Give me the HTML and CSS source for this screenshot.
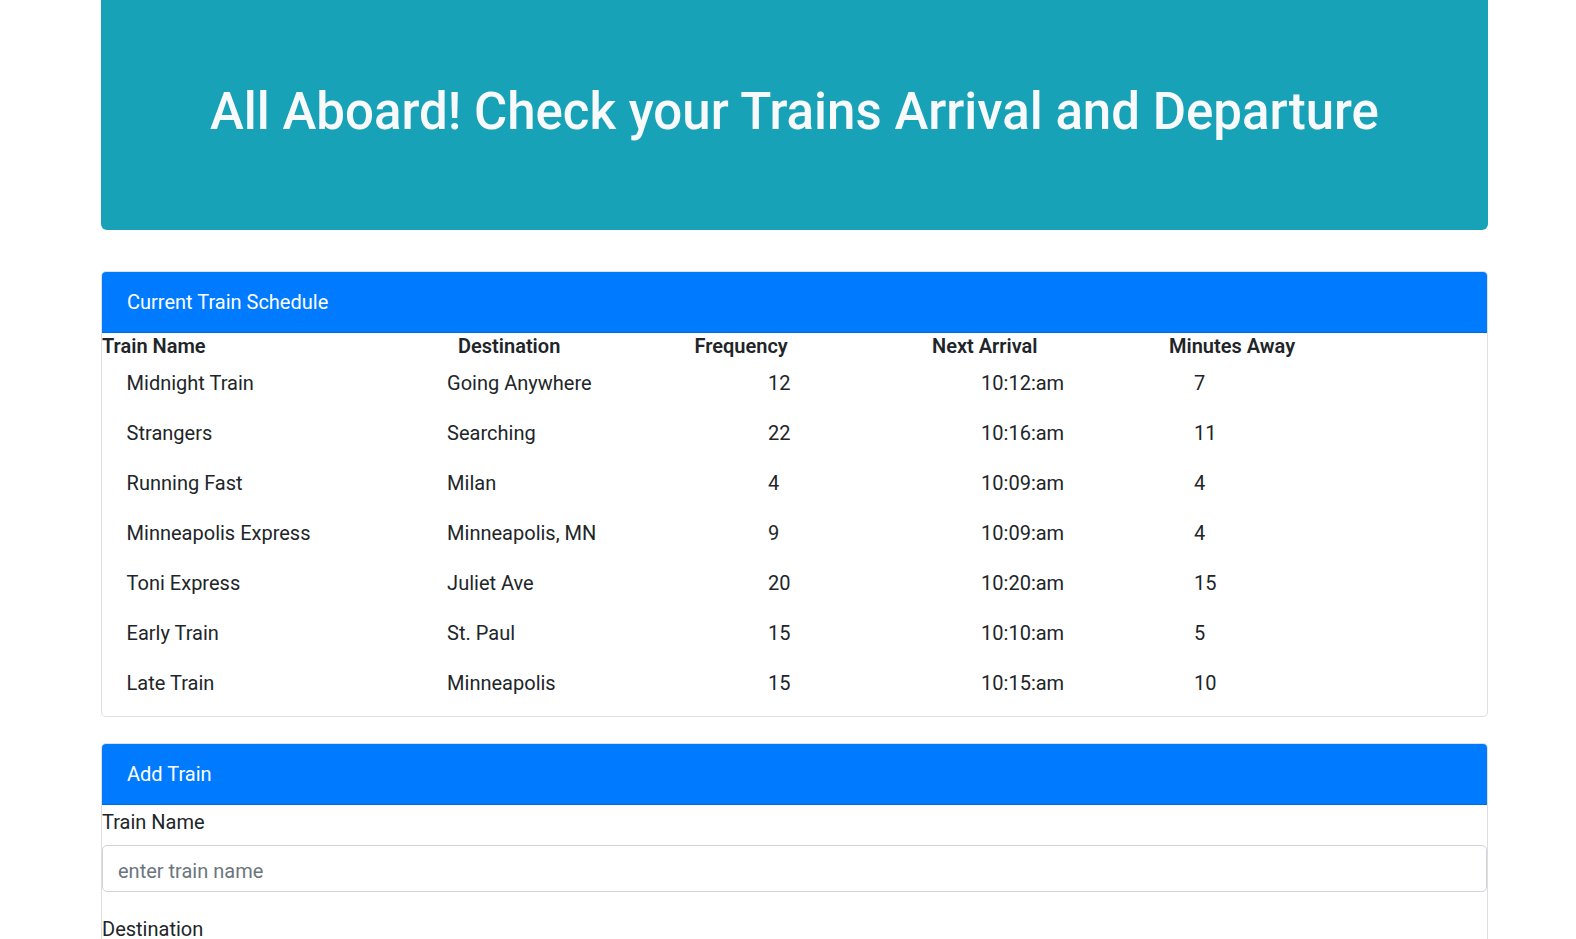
FILE: index.html
```html
<!DOCTYPE html>
<html lang="en">
<head>
<meta charset="utf-8">
<title>Train Scheduler</title>
<link rel="stylesheet" href="styles.css">
</head>
<body>
<div class="page">
  <header class="jumbotron">
    <h1 class="title">All Aboard! Check your Trains Arrival and Departure</h1>
  </header>

  <section class="card schedule">
    <div class="card-header">Current Train Schedule</div>
    <div class="sched-head">
      <div>Train Name</div>
      <div>Destination</div>
      <div>Frequency</div>
      <div>Next Arrival</div>
      <div>Minutes Away</div>
    </div>
    <div class="sched-body">
      <div class="row"><div>Midnight Train</div><div>Going Anywhere</div><div>12</div><div>10:12:am</div><div>7</div></div>
      <div class="row"><div>Strangers</div><div>Searching</div><div>22</div><div>10:16:am</div><div>11</div></div>
      <div class="row"><div>Running Fast</div><div>Milan</div><div>4</div><div>10:09:am</div><div>4</div></div>
      <div class="row"><div>Minneapolis Express</div><div>Minneapolis, MN</div><div>9</div><div>10:09:am</div><div>4</div></div>
      <div class="row"><div>Toni Express</div><div>Juliet Ave</div><div>20</div><div>10:20:am</div><div>15</div></div>
      <div class="row"><div>Early Train</div><div>St. Paul</div><div>15</div><div>10:10:am</div><div>5</div></div>
      <div class="row"><div>Late Train</div><div>Minneapolis</div><div>15</div><div>10:15:am</div><div>10</div></div>
    </div>
  </section>

  <section class="card add">
    <div class="card-header">Add Train</div>
    <form class="add-form">
      <div class="form-group">
        <label for="train-name">Train Name</label>
        <input id="train-name" class="form-control" type="text" placeholder="enter train name">
      </div>
      <div class="form-group">
        <label for="destination">Destination</label>
        <input id="destination" class="form-control" type="text" placeholder="enter destination">
      </div>
      <div class="form-group">
        <label for="first-time">First Train Time (HH:mm - military time)</label>
        <input id="first-time" class="form-control" type="text" placeholder="HH:mm">
      </div>
      <div class="form-group">
        <label for="frequency">Frequency (min)</label>
        <input id="frequency" class="form-control" type="text" placeholder="enter frequency">
      </div>
      <button type="submit" class="btn">Submit</button>
    </form>
  </section>
</div>
</body>
</html>
```

FILE: styles.css
```css
html {
  font-size: 20px;
}

body {
  margin: 0;
  font-family: Roboto, "Liberation Sans", sans-serif;
  font-size: 20px;
  line-height: 1.5;
  color: #212529;
  background: #fff;
}

.page {
  margin-left: 101px;
  width: 1387px;
}

.jumbotron {
  background: #17a2b8;
  border-radius: 0 0 6px 6px;
  padding: 81px 40px 79px;
  margin-bottom: 41px;
}

.title {
  margin: 0 0 9px;
  font-size: 51px;
  font-weight: 500;
  line-height: 1.2;
  text-align: center;
  color: #f8f9fa;
}

.card {
  border: 1px solid rgba(0, 0, 0, 0.125);
  border-radius: 5px;
  background: #fff;
  overflow: hidden;
}

.card-header {
  background: #007bff;
  color: #fff;
  padding: 15px 25px;
  line-height: 30px;
  border-bottom: 1px solid rgba(0, 0, 0, 0.125);
}

.schedule {
  margin-bottom: 26px;
  padding-bottom: 8px;
}

.sched-head {
  display: grid;
  grid-template-columns: 356px 236.5px 237.5px 237px 1fr;
  font-weight: 600;
  line-height: 25px;
  padding-top: 1px;
  margin-bottom: -1px;
}

.sched-body .row {
  display: grid;
  grid-template-columns: 320.5px 321px 213px 213px 1fr;
  padding: 10px 0;
  line-height: 30px;
}

.sched-body .row > div {
  padding-left: 24.6px;
}

.add {
  border-bottom: none;
  border-radius: 5px 5px 0 0;
}

.add-form {
  display: flex;
  flex-direction: column;
}

.form-group {
  display: flex;
  flex-direction: column;
  margin-bottom: 20px;
}

.form-group label {
  padding-top: 2px;
  margin-bottom: 8px;
  line-height: 30px;
}

.form-control {
  height: 47px;
  box-sizing: border-box;
  padding: 9.5px 15px 5.5px;
  font-family: inherit;
  font-size: 20px;
  line-height: 30px;
  color: #495057;
  border: 1px solid #ced4da;
  border-radius: 5px;
}

.form-control::placeholder {
  color: #6c757d;
}

.btn {
  align-self: flex-start;
  font-family: inherit;
  font-size: 20px;
  line-height: 30px;
  padding: 7.5px 15px;
  color: #fff;
  background: #007bff;
  border: 1px solid #007bff;
  border-radius: 5px;
}
```
